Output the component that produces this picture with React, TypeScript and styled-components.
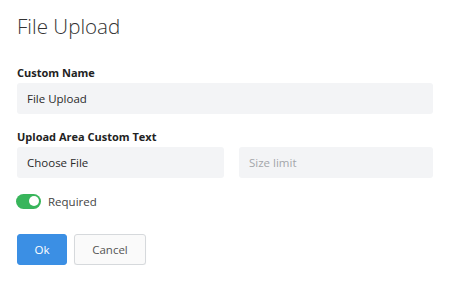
import styled, { createGlobalStyle } from 'styled-components';

const Global = createGlobalStyle`
  html, body {
    margin: 0;
    background: #fff;
    font-family: 'Open Sans', 'Liberation Sans', sans-serif;
    color: #333;
  }
`;

const Form = styled.div`
  width: 416px;
  padding: 12px 17px 0;
  display: flex;
  flex-direction: column;
`;

const Title = styled.h1`
  margin: 0 0 25px;
  font-size: 20.6px;
  font-weight: 300;
  line-height: 28px;
  color: #333;
`;

const Field = styled.div`
  display: flex;
  flex-direction: column;
  gap: 3px;
  margin-bottom: 15px;
`;

const Label = styled.label`
  font-size: 11px;
  font-weight: 700;
  line-height: 15px;
  color: #222;
`;

const Row = styled.div`
  display: grid;
  grid-template-columns: 207px 1fr;
  gap: 15px;
`;

const Input = styled.input`
  box-sizing: border-box;
  width: 100%;
  height: 31px;
  border: none;
  border-radius: 3px;
  background: #f3f4f6;
  padding: 0 11px 0 10px;
  font-family: inherit;
  font-size: 11.5px;
  color: #2a2a2a;
  outline: none;
  &::placeholder {
    color: #a3a6aa;
  }
`;

const ToggleRow = styled.div`
  display: flex;
  align-items: center;
  gap: 7px;
  height: 16px;
  margin: 0 0 25px -1px;
  font-size: 11.5px;
  color: #444;
`;

const Switch = styled.span<{ $on: boolean }>`
  position: relative;
  width: 25px;
  height: 15px;
  border-radius: 8px;
  background: ${(p) => (p.$on ? '#38b55b' : '#ccc')};
  &::after {
    content: '';
    position: absolute;
    top: 2.5px;
    left: ${(p) => (p.$on ? '12.5px' : '2.5px')};
    width: 10px;
    height: 10px;
    border-radius: 50%;
    background: #fff;
  }
`;

const Actions = styled.div`
  display: flex;
  gap: 7px;
`;

const Button = styled.button<{ $primary?: boolean }>`
  height: 31px;
  min-width: ${(p) => (p.$primary ? '50px' : '72px')};
  border-radius: 3px;
  font-family: inherit;
  font-size: 11.5px;
  border: 1px solid ${(p) => (p.$primary ? '#3b8fe4' : '#d6d9dc')};
  background: ${(p) => (p.$primary ? '#3b8fe4' : '#fafafa')};
  color: ${(p) => (p.$primary ? '#fff' : '#555')};
  box-shadow: ${(p) => (p.$primary ? 'none' : '0 1px 1px rgba(0,0,0,0.05)')};
`;

export default function App() {
  return (
    <>
      <Global />
      <Form>
        <Title>File Upload</Title>
        <Field>
          <Label>Custom Name</Label>
          <Input defaultValue="File Upload" />
        </Field>
        <Field>
          <Label>Upload Area Custom Text</Label>
          <Row>
            <Input defaultValue="Choose File" />
            <Input placeholder="Size limit" />
          </Row>
        </Field>
        <ToggleRow>
          <Switch $on />
          Required
        </ToggleRow>
        <Actions>
          <Button $primary>Ok</Button>
          <Button>Cancel</Button>
        </Actions>
      </Form>
    </>
  );
}
